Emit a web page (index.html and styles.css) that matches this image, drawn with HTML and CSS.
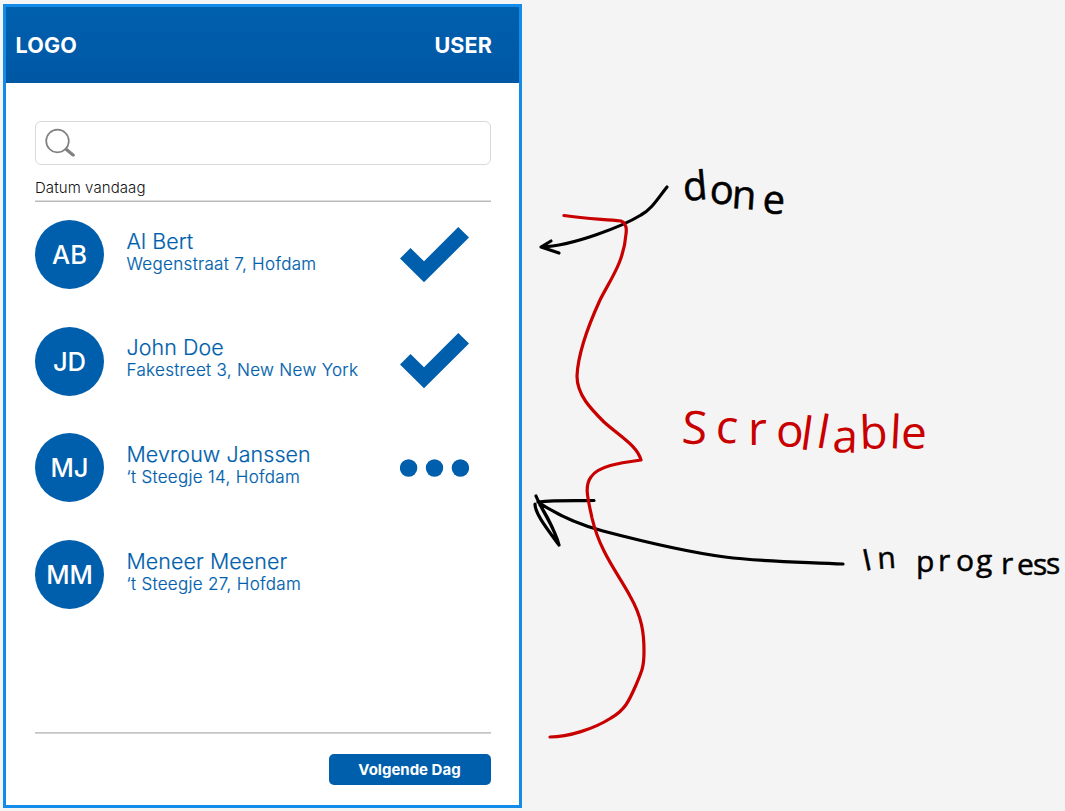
FILE: index.html
```html
<!DOCTYPE html>
<html lang="nl">
<head>
<meta charset="utf-8">
<title>Dagplanning</title>
<link rel="stylesheet" href="styles.css">
</head>
<body>
<main class="phone">
  <header class="topbar"><span>LOGO</span><span>USER</span></header>
  <section class="content">
    <div class="search">
      <svg class="search-icon" width="32" height="30" viewBox="0 0 32 30"><circle cx="12.5" cy="13" r="11.3"/><path class="handle" d="M19.8 20.8l1.5-1 8 6.6v1.6h-2l-7.5-6.2z"/></svg>
    </div>
    <h1 class="date">Datum vandaag</h1>
    <ul class="clients">
      <li class="client"><span class="avatar">AB</span><div class="info"><span class="name">Al Bert</span><span class="address">Wegenstraat 7, Hofdam</span></div><svg class="status" viewBox="0 0 69 56"><path d="M0 31.5 10.5 21 24 34.3 58.3 0 69 10.5 24 55.3z"/></svg></li>
      <li class="client"><span class="avatar">JD</span><div class="info"><span class="name">John Doe</span><span class="address">Fakestreet 3, New New York</span></div><svg class="status" viewBox="0 0 69 56"><path d="M0 31.5 10.5 21 24 34.3 58.3 0 69 10.5 24 55.3z"/></svg></li>
      <li class="client"><span class="avatar">MJ</span><div class="info"><span class="name">Mevrouw Janssen</span><span class="address">‘t Steegje 14, Hofdam</span></div><svg class="status" viewBox="0 0 69 56"><circle cx="8.6" cy="28" r="8.7"/><circle cx="34.5" cy="28" r="8.7"/><circle cx="60.4" cy="28" r="8.7"/></svg></li>
      <li class="client"><span class="avatar">MM</span><div class="info"><span class="name">Meneer Meener</span><span class="address">‘t Steegje 27, Hofdam</span></div></li>
    </ul>
    <footer class="footer"><button class="next">Volgende Dag</button></footer>
  </section>
</main>
<svg class="notes" width="1065" height="811" viewBox="0 0 1065 811">
  <g class="ink">
    <path d="M667 187C658 198 652 209 641 215C623 226 573 246 541 247M551 241L541 247L559 253"/>
    <path d="M843 564C806 562 764 562 725 557C687 552 645 542 603 531C576 524 553 512 538 502M594 500.500C578 501 556 500 538 502M536 496C543 513 555 528 559 545C548 530 535 514 535 504M540 505C549 519 555 532 559 545"/>
  </g>
  <path class="ink red" d="M564 215.500C586 219 601 219 621 221C626 223 627 227 626 234C624 262 610 280 600 300C589 324 578 352 577 376C577 395 591 409 604 422C622 438 637 446 641 460C619 463 598 466 591 477C584 486 588 499 592 518C600 552 617 572 630 596C642 617 644 633 644 651C644 667 642 671 636 685C629 701 625 710 611 718C594 729 568 737 550 737"/>
  <text class="hand done" x="684 709 731 762" y="201 203 208 213" rotate="-5 4 4 3">done</text>
  <text class="hand scroll" x="681 715 748 776 799 815 832 860 889 901" y="443 442 445 447 449 447 452 449 448 449" rotate="4 4 0 0 8 10 2 -2 3 0">Scrollable</text>
  <text class="hand progress" x="865 878 890 916 938 956 976 1001 1017 1033 1046" y="571 569 568 572 571 571 571 574 575 575 574" rotate="-12 -4 0 0 0 0 0 0 0 0 0">In progress</text>
</svg>
</body>
</html>
```
FILE: styles.css
```css
* { box-sizing: border-box; }
body {
  margin: 0;
  height: 811px;
  padding: 4px 0 0 3px;
  overflow: hidden;
  background: #f4f4f4;
  font-family: Inter, sans-serif;
  color: #005fac;
}
.phone {
  width: 519px;
  height: 804px;
  border: 3px solid #128be9;
  background: #fff;
  display: flex;
  flex-direction: column;
}
.topbar {
  height: 76px;
  padding: 0 27px 0 9.5px;
  display: flex;
  align-items: center;
  justify-content: space-between;
  background: linear-gradient(#0060ae, #0057a4);
  color: #fff;
  font-size: 21.5px;
  font-weight: 700;
  letter-spacing: 0.15px;
}
.content {
  flex: 1;
  padding: 38px 28.5px 0 29px;
  display: flex;
  flex-direction: column;
}
.search {
  height: 44px;
  border: 1px solid #d9d9d9;
  border-radius: 6px;
  padding: 6px 0 0 9px;
}
.search-icon { display: block; fill: none; stroke: #808080; stroke-width: 1.7; }
.search-icon .handle { fill: #808080; stroke-width: 0.9; }
.date {
  margin: 0;
  height: 37px;
  padding-top: 14px;
  border-bottom: 1px solid #b8b8b8;
  box-shadow: inset 0 -1px #dedede;
  color: #111;
  font-size: 15px;
  font-weight: 300;
  line-height: 18px;
  letter-spacing: 0.08px;
}
.clients {
  list-style: none;
  margin: 18px 0 0;
  padding: 0;
  display: flex;
  flex-direction: column;
  gap: 37.7px;
}
.client { height: 69px; display: flex; align-items: center; }
.avatar {
  width: 69px;
  height: 69px;
  border-radius: 50%;
  display: flex;
  align-items: center;
  justify-content: center;
  background: #005fac;
  color: #fff;
  font-size: 25.6px;
  font-weight: 500;
}
.info { margin: -6px 0 0 22.5px; display: flex; flex-direction: column; white-space: nowrap; }
.name { font-size: 21.4px; font-weight: 300; line-height: 25px; letter-spacing: 0.1px; -webkit-text-stroke: 0.2px; }
.address { font-size: 17px; font-weight: 300; line-height: 21px; letter-spacing: 0.31px; -webkit-text-stroke: 0.2px; }
.status { width: 69px; height: 56px; margin: 0 21.5px 0 auto; fill: #005fac; }
.footer {
  margin-top: auto;
  height: 73px;
  padding-top: 21px;
  border-top: 1px solid #c4c4c4;
  box-shadow: inset 0 1px #d4d4d4;
  display: flex;
  justify-content: flex-end;
  align-items: flex-start;
}
.next {
  width: 162px;
  height: 31px;
  border: 0;
  border-radius: 5px;
  background: #005fac;
  color: #fff;
  font: 700 15px Inter, sans-serif;
}
.notes { position: absolute; left: 0; top: 0; pointer-events: none; }
.ink { fill: none; stroke: #000; stroke-width: 3.2; stroke-linecap: round; stroke-linejoin: round; }
.red { stroke: #c80000; }
.hand { font-family: "Open Sans", sans-serif; fill: #000; stroke: #000; stroke-width: 0.5; stroke-linejoin: round; }
.done { font-size: 40px; }
.scroll { font-size: 46px; fill: #c80000; stroke: none; }
.progress { font-size: 30px; }
```
